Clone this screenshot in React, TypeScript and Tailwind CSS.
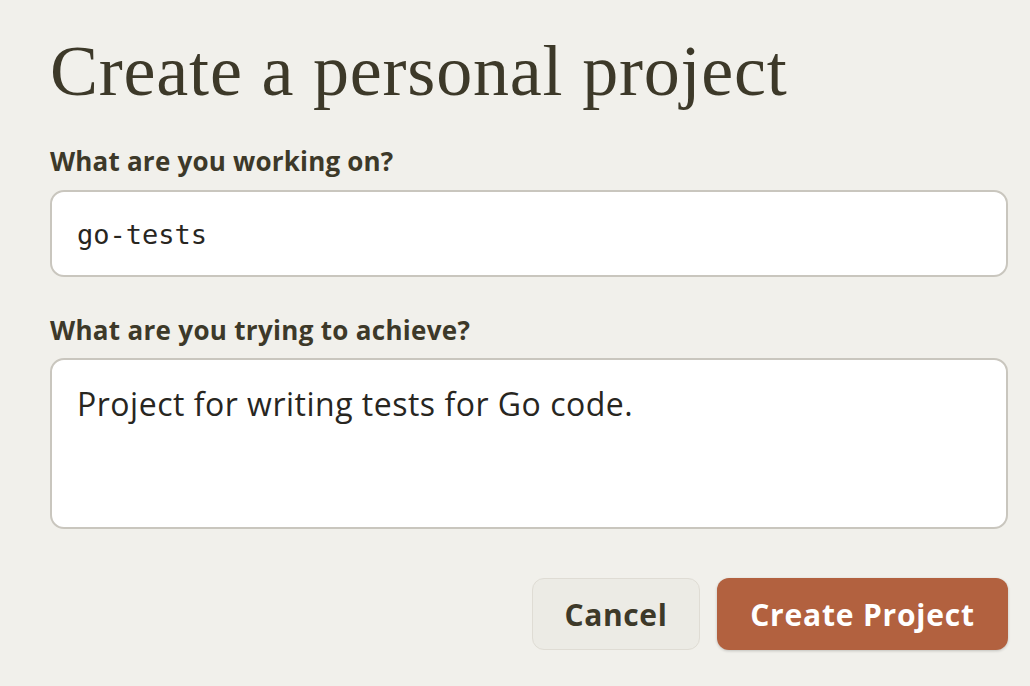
import React from "react";

export default function App() {
  return (
    <div className="w-[1030px] h-[686px] bg-[#f1f0eb] overflow-hidden pl-[50px] pr-[22px] pt-[31px]">
      <h1
        className="text-[72px] leading-[80px] text-[#3d3929] tracking-[0.8px]"
        style={{ fontFamily: '"Liberation Serif", serif' }}
      >
        Create a personal project
      </h1>
      <div className="mt-[34px] flex flex-col" style={{ fontFamily: '"Open Sans", sans-serif' }}>
        <label className="text-[26px] leading-[32px] font-bold text-[#3d3929] tracking-[0.2px]">What are you working on?</label>
        <div className="mt-[13px] h-[87px] rounded-[14px] border-[2px] border-[#c9c6be] bg-white flex items-center px-[25px]">
          <span className="text-[27px] text-[#28261f] pt-[4px]" style={{ fontFamily: '"DejaVu Sans Mono", monospace' }}>go-tests</span>
        </div>
        <label className="mt-[37px] text-[26px] leading-[32px] font-bold text-[#3d3929] tracking-[0.3px]">What are you trying to achieve?</label>
        <div className="mt-[12px] h-[171px] rounded-[14px] border-[2px] border-[#c9c6be] bg-white px-[25px] pt-[24px]">
          <span className="text-[32px] leading-[40px] text-[#28261f] tracking-[0.5px]">Project for writing tests for Go code.</span>
        </div>
        <div className="mt-[49px] flex justify-end gap-[17px]">
          <button className="w-[168px] h-[72px] rounded-[12px] border border-[#dfdcd4] bg-[#ecebe5] text-[30px] font-bold text-[#3d3929] tracking-[0.6px]">
            Cancel
          </button>
          <button className="w-[291px] h-[72px] rounded-[12px] bg-[#b2613f] text-[30px] font-bold text-white tracking-[0.8px] shadow-[0_1px_3px_rgba(0,0,0,0.2)]">
            Create Project
          </button>
        </div>
      </div>
    </div>
  );
}
